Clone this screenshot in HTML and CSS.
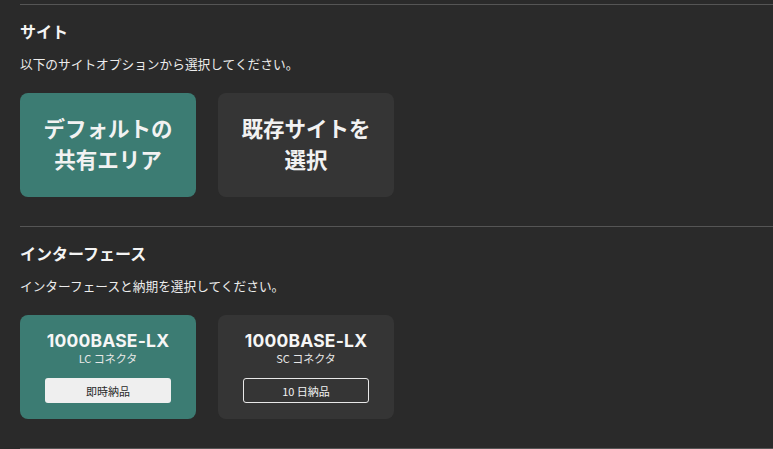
FILE: index.html
```html
<!DOCTYPE html>
<html lang="ja">
<head>
<meta charset="utf-8">
<link rel="stylesheet" href="styles.css">
</head>
<body>
<div class="page">
  <section class="section">
    <h2 class="title">サイト</h2>
    <p class="desc">以下のサイトオプションから選択してください。</p>
    <div class="options">
      <button class="card big selected">デフォルトの<br>共有エリア</button>
      <button class="card big">既存サイトを<br>選択</button>
    </div>
  </section>
  <section class="section">
    <h2 class="title">インターフェース</h2>
    <p class="desc">インターフェースと納期を選択してください。</p>
    <div class="options">
      <div class="card iface selected">
        <div class="iname">1000BASE-LX</div>
        <div class="isub">LC コネクタ</div>
        <div class="pill filled">即時納品</div>
      </div>
      <div class="card iface">
        <div class="iname">1000BASE-LX</div>
        <div class="isub">SC コネクタ</div>
        <div class="pill outline">10 日納品</div>
      </div>
    </div>
  </section>
  <div class="endline"></div>
</div>
</body>
</html>
```

FILE: styles.css
```css
html, body {
  margin: 0;
  padding: 0;
  background: #2a2a2a;
  color: #f2f2f2;
  font-family: "Noto Sans CJK JP", "Noto Sans", sans-serif;
}
.page {
  padding: 4px 0 0 20px;
}
.section {
  border-top: 1px solid #555555;
  padding: 14px 0 29px 0;
}
.title {
  margin: 0;
  font-size: 16px;
  line-height: 24px;
  font-weight: 700;
  color: #f4f4f4;
}
.desc {
  margin: 12px 0 0 0;
  font-size: 12.7px;
  line-height: 18px;
  color: #ececec;
}
.options {
  display: flex;
  gap: 22px;
  margin-top: 20px;
}
.card {
  width: 176px;
  height: 104px;
  box-sizing: border-box;
  border: none;
  border-radius: 8px;
  background: #353535;
  color: #f2f2f2;
  font-family: inherit;
}
.card.selected {
  background: #3c7c73;
}
.big {
  font-size: 21.5px;
  font-weight: 700;
  line-height: 31px;
  padding: 0 0 5px 0;
  text-align: center;
}
.iface {
  display: flex;
  flex-direction: column;
  align-items: center;
  padding-top: 16px;
}
.iname {
  font-family: "Inter", "Noto Sans", sans-serif;
  font-weight: 700;
  font-size: 17.5px;
  line-height: 20px;
  letter-spacing: 0.2px;
  color: #f6f6f6;
}
.isub {
  font-size: 11px;
  line-height: 14px;
  color: #e8e8e8;
}
.pill {
  margin-top: 13px;
  width: 126px;
  height: 25px;
  box-sizing: border-box;
  border-radius: 3px;
  font-size: 11px;
  display: flex;
  align-items: center;
  justify-content: center;
}
.pill.filled {
  background: #efefef;
  color: #2a2a2a;
}
.pill.outline {
  border: 1px solid #e8e8e8;
  color: #f2f2f2;
}
.endline {
  border-top: 1px solid #555555;
}
```
